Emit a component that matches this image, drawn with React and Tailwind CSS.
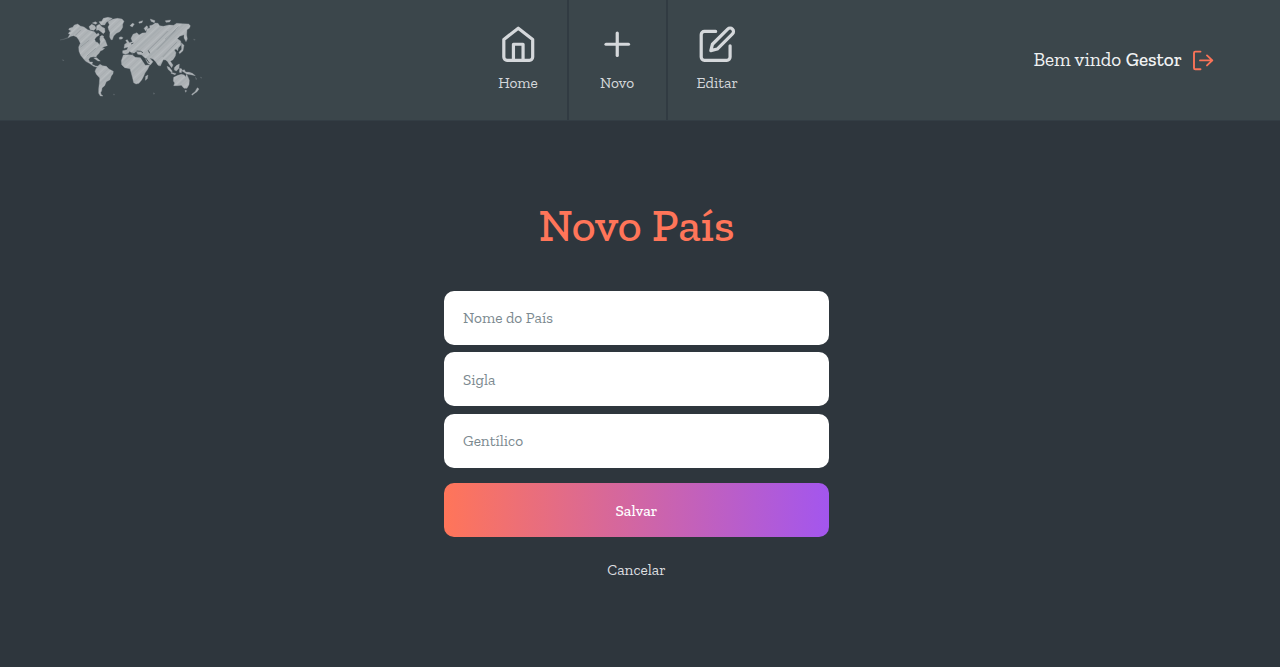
import React from "react";
import { FiHome, FiPlus, FiEdit } from "react-icons/fi";

function WorldMap() {
  return (
    <svg viewBox="0 0 480 300" className="h-[100px] w-[160px] shrink-0" role="img" aria-label="Mapa mundi">
      <defs>
        <pattern id="sketch" width="41" height="41" patternUnits="userSpaceOnUse" patternTransform="rotate(-43)">
          <rect width="41" height="41" fill="#afb4b7" />
          <path d="M0 4H41M0 22H41" stroke="#bdc1c4" strokeWidth="2" />
          <path d="M0 13H41M0 36H41" stroke="#a1a7ab" strokeWidth="1.5" />
          <path d="M0 29H41" stroke="#929a9e" strokeWidth="1.5" />
        </pattern>
      </defs>
      <g fill="url(#sketch)" stroke="#a5abaf" strokeWidth="1" strokeLinejoin="round">
        <path d="M58 70L68 67L73 60L83 57L91 63L102 66L113 74L123 77L133 80L140 88L145 84L148 90L139 96L134 103L137 110L144 113L148 120L151 111L149 101L153 94L160 97L166 106L169 114L172 122L162 125L156 130L164 130L158 135L151 138L147 145L141 151L138 156L131 155L121 157L116 163L119 171L128 171L126 178L137 183L145 184L143 187L131 184L118 175L107 169L101 162L92 151L87 139L86 126L91 115L86 104L80 96L71 92L63 94L55 98L56 94L60 88L55 86L58 81L64 78L56 74Z" />
        <path d="M117 65L125 58L134 62L138 69L132 76L121 74ZM127 54L136 50L142 54L137 58ZM140 62L148 58L156 66L164 70L165 81L160 86L153 80L146 75L139 76ZM147 50L155 49L160 40L174 37L187 40L180 46L169 52L164 60L153 60ZM149 96L156 91L162 95L154 99Z" />
        <path d="M174 50L187 43L202 40L216 42L222 49L218 58L218 67L214 74L209 80L199 85L191 93L187 104L183 104L179 96L180 82L176 74L174 66L178 59Z" />
        <path d="M207 98L213 95L219 98L216 102L209 103ZM131 159L140 158L151 168L144 168ZM138 191L144 183L150 178L158 182L169 184L177 192L190 199L189 206L184 213L180 224L169 230L164 242L156 249L155 257L152 263L154 269L159 273L151 273L146 265L146 251L148 235L149 219L139 208L135 199Z" />
        <path d="M222 130L224 118L231 113L227 106L232 104L238 113L247 110L243 100L249 88L261 83L267 90L277 84L288 83L291 71L300 69L299 62L307 60L316 54L324 55L329 62L340 64L357 60L371 61L380 55L397 56L416 57L421 62L418 70L411 74L410 90L412 102L408 110L402 99L402 89L389 94L382 101L392 108L393 120L385 129L383 137L378 132L373 135L378 143L376 153L369 164L361 169L369 180L365 188L357 177L353 170L347 165L340 164L331 183L324 181L317 170L309 162L299 159L304 165L309 170L301 180L293 175L286 160L276 151L263 148L259 139L254 143L248 148L239 139L235 145L226 148L218 145L218 137L231 134L234 126Z" />
        <path d="M220 150L234 149L247 150L256 157L271 158L278 169L286 181L299 180L293 193L285 204L281 214L275 225L267 235L258 237L251 233L247 216L243 202L240 191L224 188L215 179L214 167Z" />
        <path d="M287 214L294 210L292 221L286 226ZM266 51L278 47L276 53L268 55ZM301 42L315 47L313 53L303 49ZM346 47L362 45L359 51L348 52ZM240 62L247 55L253 57L247 66ZM282 70L290 62L294 66L287 78ZM394 113L402 121L399 137L389 146L387 142L395 133ZM365 156L370 155L368 162Z" />
        <path d="M351 184L358 187L367 199L364 202L354 193ZM373 188L380 181L388 177L387 190L379 198L373 195ZM364 202L378 206L375 209L363 205ZM389 190L396 192L394 203L388 202ZM395 197L403 194L407 201L418 202L427 205L436 212L423 209L410 207Z" />
        <path d="M371 217L384 211L394 208L403 210L406 216L410 208L415 218L418 226L417 239L411 250L402 250L394 241L383 242L371 242L374 234L370 228ZM405 256L410 257L407 262ZM442 248L447 252L441 260L432 266L427 271L425 268L435 260Z" />
        <path d="M56 96L44 101L30 105L43 103L56 99ZM37 164L42 166L40 168ZM431 102L436 104L432 106ZM436 216L441 222L438 224ZM451 216L456 218L453 220ZM310 263L315 266L311 268ZM190 267L194 268L192 271Z" opacity="0.35" />
      </g>
      <path d="M240 144L249 145L260 151L275 151M260 138L272 139L279 143M295 136L299 145M243 117L250 114M287 159L298 174" fill="none" stroke="#3b464b" strokeWidth="2.5" />
      <path d="M294 137L353 78M321 134L377 76M345 103L386 65M338 156L380 112M91 127L118 105M110 154L137 130M76 91L92 75" fill="none" stroke="#899195" strokeWidth="2" />
    </svg>
  );
}

function NavItem({ icon: Icon, label, width, last }) {
  return (
    <a className={`flex h-full flex-col items-center pt-[25px] text-[#d5d8db] ${width} ${last ? "" : "border-r-2 border-[#313b42]"}`}>
      <Icon className="size-[38.5px]" />
      <span className="mt-[9px] text-[15.4px] leading-5 whitespace-nowrap">{label}</span>
    </a>
  );
}

function LogoutIcon() {
  return (
    <svg viewBox="0 0 22 22" className="mt-px size-[22px]" fill="none" stroke="#fa7358" strokeWidth="1.9" strokeLinecap="round" strokeLinejoin="round">
      <path d="M8.5 1.6H3.3Q2 1.6 2 2.9V17.9Q2 19.2 3.3 19.2H8.5M8 10.4H20.3M15 5.4L20.3 10.4L15 15.4" />
    </svg>
  );
}

const inputClass =
  "h-[54px] w-full rounded-[10px] bg-white px-[19px] text-[15.4px] text-[#5f6c72] outline-none placeholder:text-[#7b898f] placeholder:opacity-100";

export default function App() {
  return (
    <div className="flex h-[667px] w-[1280px] flex-col overflow-hidden bg-[#2e363d] font-['Zilla_Slab','DejaVu_Serif_Condensed','DejaVu_Serif',serif]">
      <header className="grid h-[121px] shrink-0 grid-cols-[469.5px_298px_1fr] border-b border-[#333d44] bg-[#3b464b]">
        <div className="pt-[5px] pl-[50px]">
          <WorldMap />
        </div>
        <nav className="flex h-full">
          <NavItem icon={FiHome} label="Home" width="w-[99px]" />
          <NavItem icon={FiPlus} label="Novo" width="w-[99px]" />
          <NavItem icon={FiEdit} label="Editar" width="w-[99.5px]" last />
        </nav>
        <div className="flex items-center justify-end gap-[10px] pr-[66px] text-[19.25px] text-[#f0f2f3]">
          <p className="whitespace-nowrap">
            Bem vindo <span className="font-medium">Gestor</span>
          </p>
          <LogoutIcon />
        </div>
      </header>
      <main className="flex w-[1273px] flex-col items-center pt-[74px]">
        <h1 className="text-[46.2px] leading-[60px] font-medium text-[#ff7559]">Novo País</h1>
        <form className="mt-[35.5px] flex w-[385px] flex-col">
          <div className="flex flex-col gap-[7.6px]">
            <input className={inputClass} placeholder="Nome do País" />
            <input className={inputClass} placeholder="Sigla" />
            <input className={inputClass} placeholder="Gentílico" />
          </div>
          <button type="button" className="mt-[15.5px] h-[54px] rounded-[10px] bg-[linear-gradient(90deg,#ff7559,#a356ee)] text-[15.4px] font-medium text-white">
            Salvar
          </button>
          <a className="mt-[21.5px] self-center text-[15.4px] leading-[22px] text-[#dddfe0]">Cancelar</a>
        </form>
      </main>
    </div>
  );
}
